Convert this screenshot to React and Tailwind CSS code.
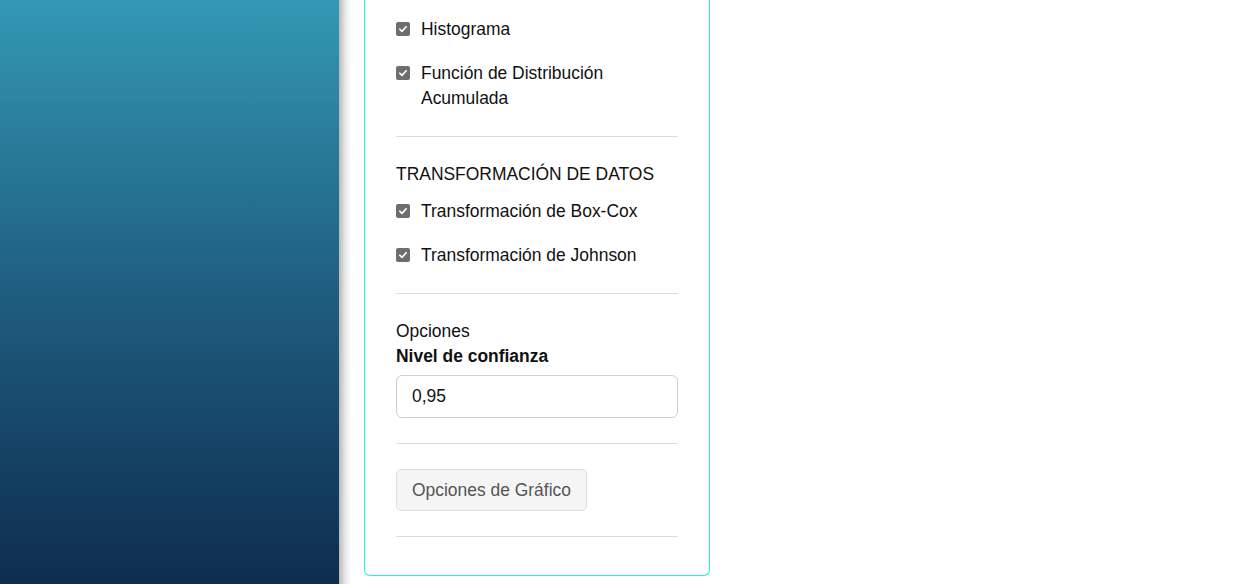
import React from 'react';

const CheckItem = ({ label, className = '' }) => (
  <label className={`flex items-start gap-[11px] ${className}`}>
    <span className="mt-[5px] flex h-[14px] w-[14px] shrink-0 items-center justify-center rounded-[2px] bg-[#6e6e6e]">
      <svg viewBox="0 0 12 12" className="h-[10px] w-[10px]" fill="none">
        <path d="M2.2 6.3 4.8 8.8 9.8 3.3" stroke="#fff" strokeWidth="2" strokeLinecap="round" strokeLinejoin="round" />
      </svg>
    </span>
    <span>{label}</span>
  </label>
);

const Divider = () => <hr className="my-[25px] border-0 border-t border-[#dcdcdc]" />;

const App = () => {
  return (
    <div
      className="flex h-[584px] w-[1250px] items-start overflow-hidden bg-white text-[17.45px] leading-[25px] text-[#111]"
      style={{ fontFamily: '"Liberation Sans", Arial, sans-serif' }}
    >
      {/* sidebar */}
      <aside className="h-full w-[339px] shrink-0 bg-gradient-to-b from-[#3399b4] via-[#1f5e80] to-[#0e2d4e]" />
      <div className="h-full w-[12px] shrink-0 bg-gradient-to-r from-[#b8b8b8] via-[#e6e6e6] to-white" />

      {/* options panel */}
      <main className="pl-[13px]">
        <div className="w-[346px] rounded-b-[6px] border border-t-0 border-[#1ff5da] px-[31px] pb-[13px] pt-[17px]">
          <CheckItem label="Histograma" />
          <CheckItem label="Función de Distribución Acumulada" className="mt-[19px]" />

          <Divider />

          <div>TRANSFORMACIÓN DE DATOS</div>
          <CheckItem label="Transformación de Box-Cox" className="mt-[12px]" />
          <CheckItem label="Transformación de Johnson" className="mt-[19px]" />

          <Divider />

          <div>Opciones</div>
          <div className="font-bold">Nivel de confianza</div>
          <input
            type="text"
            defaultValue="0,95"
            className="mt-[6px] block h-[43px] w-full rounded-[6px] border border-[#cfcfcf] px-[15px] text-[17.45px] text-[#111] outline-none"
          />

          <Divider />

          <button className="h-[42px] rounded-[5px] border border-[#dedede] bg-[#f5f5f5] px-[15px] text-[17.45px] text-[#555]">
            Opciones de Gráfico
          </button>

          <Divider />
        </div>
      </main>
    </div>
  );
};

export default App;
